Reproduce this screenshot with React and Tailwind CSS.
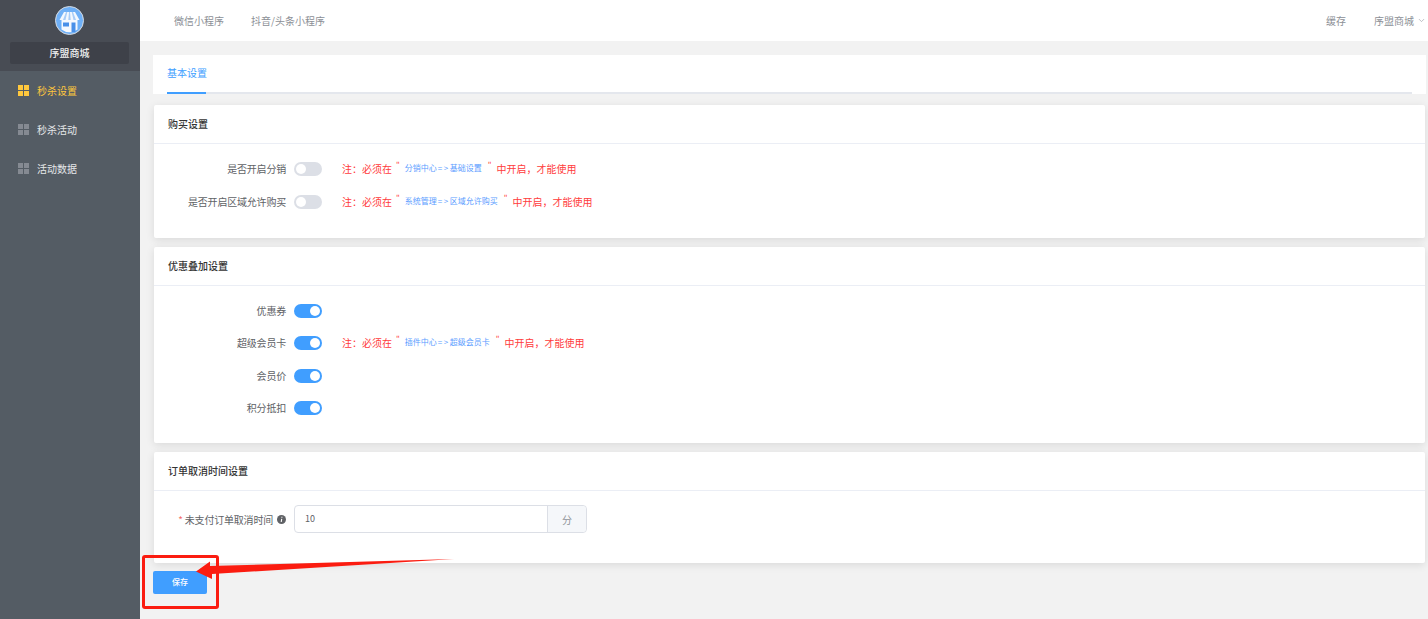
import React from 'react';
import { ChevronDown } from 'lucide-react';

const menus = [
  { label: '秒杀设置', active: true },
  { label: '秒杀活动' },
  { label: '活动数据' },
];

const GridIcon = ({ active }) => (
  <span className="grid grid-cols-2 gap-[1px] w-[11px] h-[11px]">
    {[0, 1, 2, 3].map((i) => (
      <i key={i} className={`block w-[5px] h-[5px] ${active ? 'bg-[#ffc83d]' : 'bg-[#858a92]'}`} />
    ))}
  </span>
);

const Switch = ({ on }) => (
  <span className={`flex items-center w-[28px] h-[14px] rounded-full px-[2px] ${on ? 'justify-end bg-[#409eff]' : 'justify-start bg-[#dcdfe6]'}`}>
    <i className="block w-[10px] h-[10px] rounded-full bg-white" />
  </span>
);

const Note = ({ from, to }) => (
  <span className="flex items-center pb-[2px] ml-[20px] text-[10px] text-[#ff3b3b]">
    注：必须在
    <span className="ml-[4px] mr-[3px] -translate-y-[3px] text-[8px]">"</span>
    <span className="flex items-center text-[8px] text-[#5b9dff] mx-[2px]">
      {from}
      <span className="tracking-[1.5px] ml-[1px]">{'=>'}</span>
      {to}
    </span>
    <span className="ml-[4px] mr-[5px] -translate-y-[3px] text-[8px]">"</span>
    中开启，才能使用
  </span>
);

const Row = ({ label, on, from, to, className }) => (
  <div className={`flex items-center h-[14px] ${className}`}>
    <span className="w-[140px] pr-[8px] pb-[2px] text-right text-[10px] tracking-[-0.2px] text-[#606266]">{label}</span>
    <Switch on={on} />
    {from && <Note from={from} to={to} />}
  </div>
);

const Card = ({ title, height, children }) => (
  <section className={`bg-white mx-[1px] rounded-[2px] shadow-[0_2px_8px_rgba(0,0,0,0.1)] ${height}`}>
    <h3 className="flex items-center h-[39px] pl-[14px] pb-[2px] text-[10px] font-medium text-[#333] border-b border-[#ebeef5]">{title}</h3>
    {children}
  </section>
);

export default function App() {
  return (
    <div className="relative flex w-[1428px] h-[619px] overflow-hidden bg-[#f2f2f2] font-['Noto_Sans_CJK_SC','Noto_Sans',sans-serif]">
      <aside className="w-[140px] shrink-0 bg-[#545c64]">
        <div className="flex flex-col items-start h-[71px] pt-[6px] bg-[#484c54]">
          <svg className="ml-[55px]" width="29" height="29" viewBox="0 0 29 29">
            <circle cx="14.500" cy="14.500" r="14" fill="#6fb0f7" stroke="#d7dbe0" />
            <path d="M6.500 14h16v9.500a13 13 0 0 1-16 0z" fill="#f6f9fe" />
            <path d="M9 6h11l4.500 8h-20z" fill="#f4f8fe" />
            <path d="M11 6h1.300l-1.800 8H8zM14 6h1l.7 8h-2.400zM16.700 6H18l3 8h-2.500z" fill="#a9cdf8" />
            <rect x="8" y="16.500" width="6" height="4" fill="#4a90e8" />
            <rect x="16.500" y="16.500" width="4" height="9.500" fill="#4a90e8" />
          </svg>
          <div className="flex items-center justify-center w-[119px] h-[22px] ml-[10px] mt-[7px] pb-[2px] rounded-[2px] bg-[#3e4149] text-[10px] font-medium text-[#f2f2f2]">序盟商城</div>
        </div>
        <nav>
          {menus.map((m) => (
            <div key={m.label} className="flex items-center gap-[8px] h-[39px] pl-[18px]">
              <GridIcon active={m.active} />
              <span className={`text-[10px] ${m.active ? 'text-[#ffc83d]' : 'text-[#e6e8ea]'}`}>{m.label}</span>
            </div>
          ))}
        </nav>
      </aside>

      <div className="flex-1 min-w-0">
        <header className="flex items-center h-[41px] bg-white text-[10px] text-[#8c8f96]">
          <span className="ml-[34px]">微信小程序</span>
          <span className="ml-[27px]">抖音/头条小程序</span>
          <span className="ml-auto">缓存</span>
          <span className="ml-[28px]">序盟商城</span>
          <ChevronDown className="w-[9px] h-[9px] ml-[3px] mr-[2px] text-[#a8abb2]" />
        </header>

        <main className="pl-[13px] pr-[2px] pt-[14px]">
          <div className="h-[39px] bg-white px-[14px]">
            <div className="h-[39px] border-b-2 border-[#e4e7ed]">
              <span className="flex items-center w-[39px] h-[39px] pb-[2px] whitespace-nowrap border-b-2 border-[#409eff] text-[10px] text-[#409eff]">基本设置</span>
            </div>
          </div>

          <div className="flex flex-col gap-[9px] mt-[11px]">
            <Card title="购买设置" height="h-[133px]">
              <Row className="mt-[18px]" label="是否开启分销" from="分销中心" to="基础设置" />
              <Row className="mt-[19px]" label="是否开启区域允许购买" from="系统管理" to="区域允许购买" />
            </Card>
            <Card title="优惠叠加设置" height="h-[196px]">
              <Row className="mt-[18px]" label="优惠券" on />
              <Row className="mt-[18px]" label="超级会员卡" on from="插件中心" to="超级会员卡" />
              <Row className="mt-[19px]" label="会员价" on />
              <Row className="mt-[18px]" label="积分抵扣" on />
            </Card>
            <Card title="订单取消时间设置" height="h-[111px]">
              <div className="flex items-center mt-[14px]">
                <span className="flex items-center justify-end w-[140px] pr-[8px] text-[10px] tracking-[-0.2px] text-[#606266]">
                  <span className="text-[#f56c6c] mr-[2px]">*</span>未支付订单取消时间
                  <svg className="ml-[4px]" width="9" height="9" viewBox="0 0 9 9">
                    <circle cx="4.500" cy="4.500" r="4.500" fill="#606266" />
                    <path d="M4.900 1.800v1M4.700 3.800 4.200 7" stroke="#fff" strokeWidth="1.100" />
                  </svg>
                </span>
                <div className="flex w-[293px] h-[28px] border border-[#dcdfe6] rounded-[4px] text-[10px] text-[#606266]">
                  <span className="flex items-center flex-1 pl-[10px] text-[9px]">10</span>
                  <span className="flex items-center justify-center w-[39px] bg-[#f5f7fa] border-l border-[#dcdfe6] rounded-r-[4px] text-[#909399]">分</span>
                </div>
              </div>
            </Card>
          </div>

          <button className="flex items-center justify-center w-[54px] h-[23px] mt-[8px] pb-[2px] rounded-[2px] bg-[#409eff] text-[8px] font-medium text-white">保存</button>
        </main>
      </div>

      {/* annotation drawn on top of the screenshot */}
      <div className="absolute left-[142px] top-[555px] w-[77px] h-[54px] rounded-[3px] border-[3px] border-[#fb1c10]" />
      <svg className="absolute left-0 top-0 pointer-events-none" width="1428" height="619">
        <path d="M196 571.500 L210 561.500 L210 566 L454 559 L212 574 L212 579 Z" fill="#fb1c10" />
      </svg>
    </div>
  );
}
